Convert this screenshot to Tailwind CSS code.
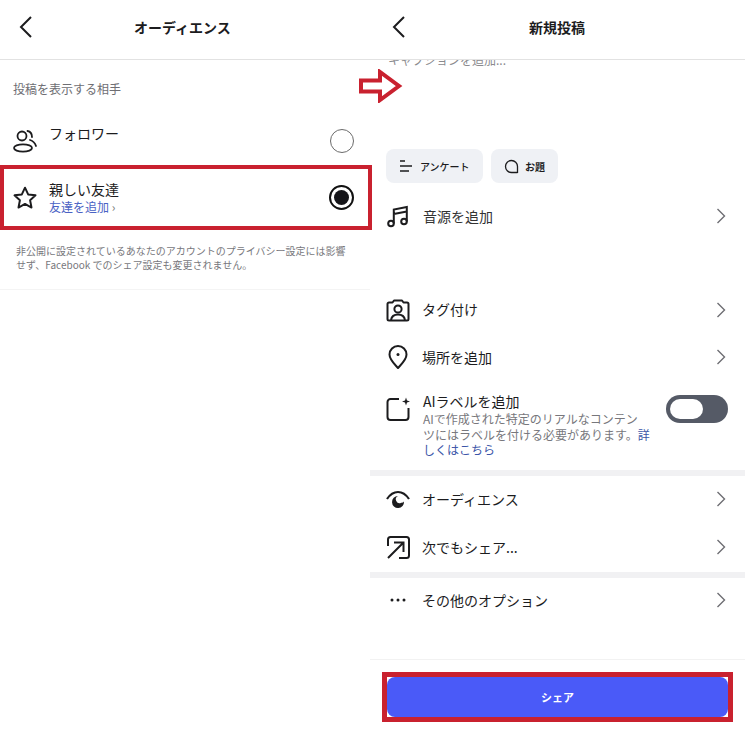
<!DOCTYPE html>
<html lang="ja">
<head>
    <meta charset="UTF-8">
    <meta name="viewport" content="width=device-width, initial-scale=1.0">
    <title>オーディエンス / 新規投稿</title>
    <script src="https://cdn.jsdelivr.net/npm/@tailwindcss/browser@4"></script>
</head>
<body class="bg-white overflow-hidden font-['Noto_Sans_CJK_JP','Noto_Sans',sans-serif] text-[#1c1c1e]">
    <div class="relative flex w-[745px] h-[734px]">
        <!-- Left screen: audience -->
        <section class="w-[370px] shrink-0">
            <header class="flex items-center h-[60px] border-b border-[#e2e2e2] pb-[6px] pl-[17px]">
                <svg class="w-[18px] h-[24px]" viewBox="0 0 18 24" fill="none" stroke="#1c1c1e" stroke-width="2"><path d="M14 2 4 12l10 10"/></svg>
                <h1 class="ml-[99px] text-[14px] font-bold leading-none">オーディエンス</h1>
            </header>
            <p class="pl-[13px] pt-[20px] text-[12px] leading-[18px] text-[#6e6e73]">投稿を表示する相手</p>
            <div class="flex items-start h-[56px] mt-[11px] pl-[13px] pr-[16px] pt-[14px]">
                <svg class="w-[24px] h-[24px] mt-[6px] shrink-0" viewBox="0 0 24 24" fill="none" stroke="#1c1c1e" stroke-width="1.800" stroke-linecap="round"><circle cx="9" cy="7" r="4.500"/><ellipse cx="10" cy="19" rx="9" ry="3.600"/><path d="M14.500 2C17 2.500 19 5 19 8M17 11c3 1 5 3 6 6"/></svg>
                <span class="ml-[12px] text-[14px] leading-[20px]">フォロワー</span>
                <span class="ml-auto mt-[6px] w-[24px] h-[24px] rounded-full border-[1.5px] border-[#6b6b6b]"></span>
            </div>
            <div class="flex items-center w-[372px] h-[65px] border-[4px] border-[#c9212f] pl-[8px] pr-[14px]">
                <svg class="w-[26px] h-[26px] shrink-0" viewBox="0 0 24 24" fill="none" stroke="#1c1c1e" stroke-width="1.800" stroke-linejoin="round"><path d="m12 2.500 2.900 6.200 6.800.8-5 4.600 1.300 6.700-6-3.300-6 3.300 1.300-6.700-5-4.600 6.800-.8z"/></svg>
                <div class="ml-[11px]">
                    <p class="text-[14px] leading-[17px]">親しい友達</p>
                    <p class="mt-px text-[12px] leading-[16px] text-[#4a62c4]">友達を追加 <span class="text-[#777]">›</span></p>
                </div>
                <span class="ml-auto flex items-center justify-center w-[25px] h-[25px] rounded-full border-[2px] border-[#111]">
                    <span class="w-[15px] h-[15px] rounded-full bg-[#16161a]"></span>
                </span>
            </div>
            <p class="pl-[16px] pr-[19px] pt-[14px] pb-[17px] text-[10px] leading-[14px] text-[#77777c] border-b border-[#f4f4f4]">非公開に設定されているあなたのアカウントのプライバシー設定には影響せず、Facebook でのシェア設定も変更されません。</p>
        </section>

        <!-- Right screen: new post -->
        <section class="flex-1 flex flex-col">
            <header class="flex items-center h-[60px] border-b border-[#e2e2e2] pb-[6px] pl-[20px]">
                <svg class="w-[18px] h-[24px]" viewBox="0 0 18 24" fill="none" stroke="#1c1c1e" stroke-width="2"><path d="M14 2 4 12l10 10"/></svg>
                <h1 class="ml-[121px] text-[14px] font-bold leading-none">新規投稿</h1>
            </header>
            <div class="h-[89px] overflow-hidden">
                <p class="pl-[18px] -mt-[9px] text-[12px] leading-[18px] text-[#8a8a8e]">キャプションを追加...</p>
            </div>
            <div class="flex gap-[8px] pl-[16px]">
                <div class="flex items-center w-[97px] h-[34px] pl-[13px] rounded-[8px] bg-[#eff1f5]">
                    <svg class="w-[14px] h-[14px]" viewBox="0 0 14 14" fill="none" stroke="#1c1c1e" stroke-width="1.300"><path d="M1 2h5M1 7h12M1 12h9"/></svg>
                    <span class="ml-[7px] text-[10px] font-medium">アンケート</span>
                </div>
                <div class="flex items-center w-[67px] h-[34px] pl-[13px] rounded-[8px] bg-[#eff1f5]">
                    <svg class="w-[15px] h-[15px]" viewBox="0 0 15 15" fill="none" stroke="#1c1c1e" stroke-width="1.300"><path d="M13.500 14V7.500a6 6 0 1 0-6 6h6"/></svg>
                    <span class="ml-[6px] text-[10px] font-bold">お題</span>
                </div>
            </div>
            <div class="flex items-center h-[48px] pb-[2px] mt-[10px] pl-[16px] pr-[19px]">
                <svg class="w-[24px] h-[24px] shrink-0" viewBox="0 0 24 24" fill="none" stroke="#1c1c1e" stroke-width="2"><circle cx="5" cy="19.500" r="2.800"/><circle cx="18" cy="17.500" r="2.800"/><path d="M7.800 19.500V5.500L20.800 3V17.500M7.800 10 20.800 7.500"/></svg>
                <span class="ml-[13px] text-[14px] text-[#333]">音源を追加</span>
                <svg class="ml-auto w-[10px] h-[16px]" viewBox="0 0 10 16" fill="none" stroke="#6e6e73" stroke-width="1.400"><path d="m1.500 1 7 7-7 7"/></svg>
            </div>
            <div class="flex items-center h-[47px] pb-[2px] mt-[46px] pl-[16px] pr-[19px]">
                <svg class="w-[24px] h-[24px] shrink-0" viewBox="0 0 24 24" fill="none" stroke="#1c1c1e" stroke-width="2" stroke-linejoin="round"><path d="M8 2.500h8l1.500 2H21a1.500 1.500 0 0 1 1.500 1.500v15a1.500 1.500 0 0 1-1.500 1.500H3A1.500 1.500 0 0 1 1.500 21V6A1.500 1.500 0 0 1 3 4.500h3.500z"/><circle cx="12" cy="11" r="3.600"/><path d="M5 22c.6-3.500 3.500-5.500 7-5.500s6.400 2 7 5.500"/></svg>
                <span class="ml-[12px] text-[14px]">タグ付け</span>
                <svg class="ml-auto w-[10px] h-[16px]" viewBox="0 0 10 16" fill="none" stroke="#6e6e73" stroke-width="1.400"><path d="m1.500 1 7 7-7 7"/></svg>
            </div>
            <div class="flex items-center h-[48px] pb-[2px] pl-[16px] pr-[19px]">
                <svg class="w-[24px] h-[24px] shrink-0" viewBox="0 0 24 24" fill="none" stroke="#1c1c1e" stroke-width="2"><path d="M12 23c-2.500-3-8.500-8-8.500-13.500a8.500 8.500 0 0 1 17 0C20.500 15 14.500 20 12 23z"/><circle cx="12" cy="9.500" r="1.500" fill="#1c1c1e" stroke="none"/></svg>
                <span class="ml-[12px] text-[14px]">場所を追加</span>
                <svg class="ml-auto w-[10px] h-[16px]" viewBox="0 0 10 16" fill="none" stroke="#6e6e73" stroke-width="1.400"><path d="m1.500 1 7 7-7 7"/></svg>
            </div>
            <div class="flex items-start h-[88px] pl-[16px] pr-[17px] pt-[10px]">
                <svg class="w-[24px] h-[24px] mt-[5px] shrink-0" viewBox="0 0 24 24" fill="none" stroke="#1c1c1e" stroke-width="2"><path d="M13 2H4.500a3 3 0 0 0-3 3v15a3 3 0 0 0 3 3h15a3 3 0 0 0 3-3v-9"/><path d="m20 .5 1 3 3 1-3 1-1 3-1-3-3-1 3-1z" fill="#1c1c1e" stroke="none"/></svg>
                <div class="ml-[13px] w-[232px]">
                    <p class="text-[14px] leading-[19px]">AIラベルを追加</p>
                    <p class="text-[12px] leading-[15.500px] text-[#77777c]">AIで作成された特定のリアルなコンテン<br>ツにはラベルを付ける必要があります。<span class="text-[#3b55a8]">詳<br>しくはこちら</span></p>
                </div>
                <span class="ml-auto mt-[3px] flex items-center w-[62px] h-[28px] rounded-full bg-[#555a66] pl-[4px]">
                    <span class="w-[33px] h-[20px] rounded-full bg-white"></span>
                </span>
            </div>
            <div class="h-[6px] bg-[#f1f1f3]"></div>
            <div class="flex items-center h-[48px] pb-[2px] pl-[16px] pr-[19px]">
                <svg class="w-[24px] h-[20px] shrink-0" viewBox="0 0 24 20" fill="none"><path d="M1 10C4 5.500 8 3 12 3s8 2.500 11 7" stroke="#1c1c1e" stroke-width="2.200"/><path d="M12 7a6 6 0 1 0 6 5.500c-.8.900-1.800 1.300-2.800 1.200A3.500 3.500 0 0 1 12 7z" fill="#1c1c1e"/></svg>
                <span class="ml-[12px] text-[14px]">オーディエンス</span>
                <svg class="ml-auto w-[10px] h-[16px]" viewBox="0 0 10 16" fill="none" stroke="#6e6e73" stroke-width="1.400"><path d="m1.500 1 7 7-7 7"/></svg>
            </div>
            <div class="flex items-center h-[48px] pb-[2px] pl-[16px] pr-[19px]">
                <svg class="w-[24px] h-[24px] shrink-0" viewBox="0 0 24 24" fill="none" stroke="#1c1c1e" stroke-width="2"><path d="M2 11V4.500A2.500 2.500 0 0 1 4.500 2h16A2.500 2.500 0 0 1 23 4.500v16a2.500 2.500 0 0 1-2.500 2.500H13"/><path d="M2 23 17 8M8 7.500h9.500V17"/></svg>
                <span class="ml-[12px] text-[14px]">次でもシェア...</span>
                <svg class="ml-auto w-[10px] h-[16px]" viewBox="0 0 10 16" fill="none" stroke="#6e6e73" stroke-width="1.400"><path d="m1.500 1 7 7-7 7"/></svg>
            </div>
            <div class="h-[6px] bg-[#f1f1f3]"></div>
            <div class="flex items-center h-[46px] pb-[2px] pl-[16px] pr-[19px]">
                <svg class="w-[24px] h-[24px] shrink-0" viewBox="0 0 24 24" fill="#1c1c1e"><circle cx="6" cy="12" r="1.500"/><circle cx="12" cy="12" r="1.500"/><circle cx="18" cy="12" r="1.500"/></svg>
                <span class="ml-[12px] text-[14px]">その他のオプション</span>
                <svg class="ml-auto w-[10px] h-[16px]" viewBox="0 0 10 16" fill="none" stroke="#6e6e73" stroke-width="1.400"><path d="m1.500 1 7 7-7 7"/></svg>
            </div>
            <div class="h-[35px] border-b border-[#f2f2f2] box-content"></div>
            <div class="ml-[12px] mt-[12px] w-[351px] h-[50px] border-[5px] border-[#c9212f]">
                <button class="flex items-center justify-center w-full h-full rounded-[8px] bg-[#4a5af8] text-white text-[11px] font-bold">シェア</button>
            </div>
        </section>

        <!-- Annotation arrow over the screens -->
        <svg class="absolute left-[358px] top-[69px] w-[45px] h-[34px]" viewBox="0 0 45 34" fill="#fff" stroke="#c9212f" stroke-width="4"><path d="M3 11.500h19V3l19 14-19 14v-8.500H3z"/></svg>
    </div>
</body>
</html>
